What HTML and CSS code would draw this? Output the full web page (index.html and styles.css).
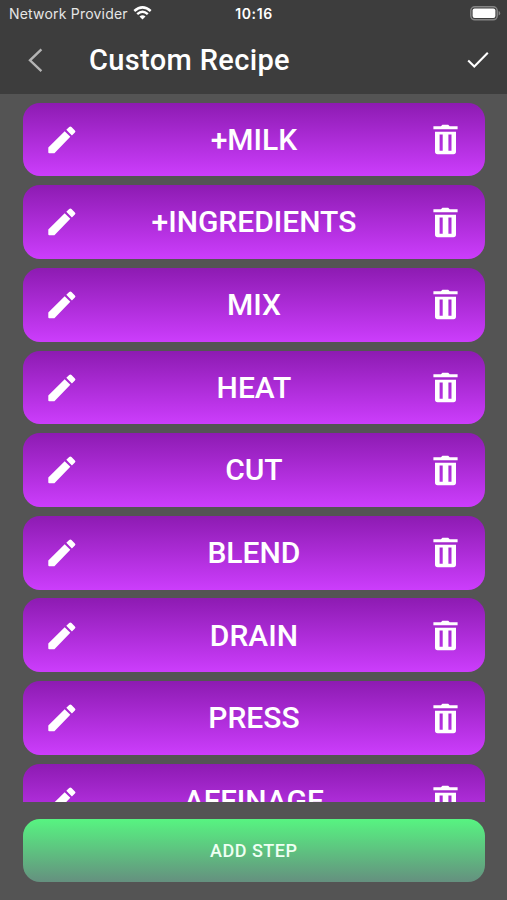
FILE: index.html
```html
<!DOCTYPE html>
<html lang="en">
<head>
<meta charset="utf-8">
<title>Custom Recipe</title>
<link rel="stylesheet" href="styles.css">
</head>
<body>
<svg class="defs" width="0" height="0" aria-hidden="true">
  <symbol id="pencil" viewBox="0 0 28 28"><path d="M.3 21.4 16.7 5.2 22.3 10.8 6.4 27.2H1.2Q.3 27.2 .3 26.3ZM18.3 3.8 21.2 1Q22.4 0 23.5 1L26.9 4.4Q28 5.5 26.9 6.6L23.9 9.4Z"/></symbol>
  <symbol id="trash" viewBox="0 0 25 31"><path d="M.4 2.2H7.9L9.4.8H15.2L16.7 2.2H24.6V5.2H.4Z"/><path fill-rule="evenodd" d="M2 7.7H23V27.6Q23 30.2 20.4 30.2H4.6Q2 30.2 2 27.6ZM6.6 10.6V26.8H9.7V10.6ZM15.4 10.6V26.8H18.5V10.6Z"/></symbol>
</svg>
<div class="app">
  <header class="top">
    <div class="status">
      <div class="network"><span class="carrier">Network Provider</span>
        <svg class="wifi" viewBox="0 0 18 14"><path d="M.8 5Q9-2.2 17.2 5M3.7 8.1Q9 3.5 14.3 8.1" fill="none" stroke="#fff" stroke-width="2.5"/><path d="M6 10.5Q9 8 12 10.5L9 13.4Z" fill="#fff"/></svg>
      </div>
      <span class="time">10:16</span>
      <svg class="battery" viewBox="0 0 31 15"><rect x=".8" y=".8" width="26.4" height="13" rx="4" fill="#3d3d3d" stroke="#858585" stroke-width="1.5"/><rect x="2.6" y="2.6" width="22.8" height="9.4" rx="2" fill="#fff"/><path d="M28.6 5Q30.2 5.3 30.2 7.3T28.6 9.6Z" fill="#858585"/></svg>
    </div>
    <div class="bar">
      <svg class="back" viewBox="0 0 15 25"><path d="M13.4 1.4 2 12.3 13.4 23.2" fill="none" stroke="#b4b4b4" stroke-width="2.4"/></svg>
      <h1 class="title">Custom Recipe</h1>
      <svg class="check" viewBox="0 0 22 18"><path d="M1.2 9.5 7.3 15.5 20.8 1.8" fill="none" stroke="#fff" stroke-width="2.1"/></svg>
    </div>
  </header>
  <main class="steps">
    <div class="step"><svg class="pencil"><use href="#pencil"/></svg><span class="label">+MILK</span><svg class="trash"><use href="#trash"/></svg></div>
    <div class="step"><svg class="pencil"><use href="#pencil"/></svg><span class="label">+INGREDIENTS</span><svg class="trash"><use href="#trash"/></svg></div>
    <div class="step"><svg class="pencil"><use href="#pencil"/></svg><span class="label">MIX</span><svg class="trash"><use href="#trash"/></svg></div>
    <div class="step"><svg class="pencil"><use href="#pencil"/></svg><span class="label">HEAT</span><svg class="trash"><use href="#trash"/></svg></div>
    <div class="step"><svg class="pencil"><use href="#pencil"/></svg><span class="label">CUT</span><svg class="trash"><use href="#trash"/></svg></div>
    <div class="step"><svg class="pencil"><use href="#pencil"/></svg><span class="label">BLEND</span><svg class="trash"><use href="#trash"/></svg></div>
    <div class="step"><svg class="pencil"><use href="#pencil"/></svg><span class="label">DRAIN</span><svg class="trash"><use href="#trash"/></svg></div>
    <div class="step"><svg class="pencil"><use href="#pencil"/></svg><span class="label">PRESS</span><svg class="trash"><use href="#trash"/></svg></div>
    <div class="step"><svg class="pencil"><use href="#pencil"/></svg><span class="label">AFFINAGE</span><svg class="trash"><use href="#trash"/></svg></div>
  </main>
  <button class="add">ADD STEP</button>
</div>
</body>
</html>
```
FILE: styles.css
```css
* { box-sizing: border-box; }
body { margin: 0; background: #545454; color: #fff; font-family: Roboto, sans-serif; }
.defs { display: block; }
.app { display: flex; flex-direction: column; height: 900px; overflow: hidden; }
.top { flex: none; height: 94px; background: #3d3d3d; }
.status { display: grid; grid-template-columns: 1fr auto 1fr; align-items: center; height: 27px; padding: 0 6px 0 7px; font: 14px/27px Inter, sans-serif; }
.network { display: flex; align-items: center; gap: 5.5px; padding-left: 2px; }
.carrier { color: #e6e6e6; letter-spacing: .2px; white-space: nowrap; }
.wifi { width: 19px; height: 14px; margin-top: -1px; }
.time { font-weight: 600; letter-spacing: .6px; }
.battery { justify-self: end; width: 31px; height: 15px; }
.bar { display: flex; align-items: center; height: 66px; padding: 0 18px 0 27.5px; }
.back { width: 15px; height: 25px; }
.title { flex: 1; margin: 0 0 0 46.5px; font-size: 29px; font-weight: 500; line-height: 36px; letter-spacing: .35px; }
.check { width: 22px; height: 18px; }
.steps { display: flex; flex: none; flex-direction: column; gap: 8.85px; height: 707.5px; padding: 8.6px 22px 0 22.5px; overflow: hidden; }
.step { display: grid; flex: none; grid-template-columns: 28px 1fr 25px; align-items: center; height: 73.8px; padding: .4px 26.7px 0 25px; border-radius: 17px; background: linear-gradient(#8d1bb2, #cc3dfc); fill: #fff; }
.pencil { width: 28px; height: 28px; }
.label { padding-right: 1px; font-size: 30px; font-weight: 500; line-height: 36px; text-align: center; }
.trash { width: 25px; height: 31px; }
.add { flex: none; height: 63px; margin: 17.5px 22px 0 22.5px; padding: 0; border: 0; border-radius: 17px; background: linear-gradient(#57f481, #65907f); color: #effff3; font: 500 18px/24px Roboto, sans-serif; letter-spacing: .5px; }
```
